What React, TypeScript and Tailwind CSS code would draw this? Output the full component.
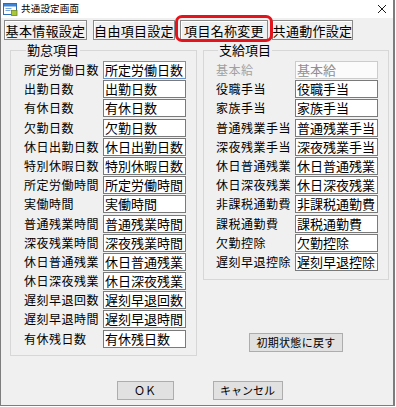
import React from "react";

const font = "font-['Noto_Sans_CJK_JP','Noto_Sans_CJK_SC',sans-serif]";

const kintai = [
  "所定労働日数",
  "出勤日数",
  "有休日数",
  "欠勤日数",
  "休日出勤日数",
  "特別休暇日数",
  "所定労働時間",
  "実働時間",
  "普通残業時間",
  "深夜残業時間",
  "休日普通残業",
  "休日深夜残業",
  "遅刻早退回数",
  "遅刻早退時間",
  "有休残日数",
];

const shikyu = [
  "基本給",
  "役職手当",
  "家族手当",
  "普通残業手当",
  "深夜残業手当",
  "休日普通残業",
  "休日深夜残業",
  "非課税通勤費",
  "課税通勤費",
  "欠勤控除",
  "遅刻早退控除",
];

function Row({ label, disabled, focused }: { label: string; disabled?: boolean; focused?: boolean }) {
  return (
    <div className="flex items-center h-[18px]">
      <div
        className={`w-[79px] text-[12px] leading-[14px] tracking-[0.5px] whitespace-nowrap ${
          disabled ? "text-[#a0a0a0]" : "text-black"
        }`}
      >
        {label}
      </div>
      <div
        className={`w-[83px] h-[18px] border pl-[1px] text-[13px] leading-[16px] whitespace-nowrap overflow-hidden ${
          disabled
            ? "border-[#cccccc] bg-[#fbfbfb] text-[#8f8f8f]"
            : focused
            ? "border-[#6f93c6] bg-white text-black"
            : "border-[#7a7a7a] bg-white text-black"
        }`}
      >
        {label}
      </div>
    </div>
  );
}

function WinButton({ children, className }: { children: React.ReactNode; className?: string }) {
  return (
    <div
      className={`h-[19px] flex items-center justify-center bg-[#e1e1e1] border border-[#adadad] text-[11px] leading-none text-black whitespace-nowrap ${className ?? ""}`}
    >
      {children}
    </div>
  );
}

function Tab({ children, className }: { children: React.ReactNode; className?: string }) {
  return (
    <div
      className={`h-[20px] flex items-center justify-center bg-[#f0f0f0] border border-[#8a8a8a] shadow-[inset_1px_1px_0_#ffffff] text-[13px] leading-none tracking-[0.3px] text-black whitespace-nowrap ${className ?? ""}`}
    >
      {children}
    </div>
  );
}

function AppIcon() {
  return (
    <svg width="15" height="14" viewBox="0 0 15 14">
      <rect x="0.5" y="1.5" width="13" height="11" fill="#ffffff" stroke="#2f6db5" />
      <rect x="1" y="2" width="12" height="2.5" fill="#3d83d6" />
      <rect x="2.5" y="6" width="6" height="1" fill="#7aa6d8" />
      <rect x="2.5" y="8" width="5" height="1" fill="#7aa6d8" />
      <rect x="8.5" y="8.5" width="5.5" height="5" fill="#a9c93a" stroke="#6d8a1e" strokeWidth="0.8" />
    </svg>
  );
}

export default function App() {
  return (
    <div className={`w-[396px] h-[407px] bg-white ${font}`}>
      <div className="relative w-[395px] h-[406px] bg-[#f0f0f0] border-l border-r-2 border-b border-[#7d7d7d] flex flex-col">
        {/* title bar */}
        <div className="h-[18px] bg-white flex items-center pl-[2px] shrink-0">
          <AppIcon />
          <span className="ml-[3px] text-[9.5px] leading-none tracking-[0.2px] text-black">共通設定画面</span>
          <svg className="ml-auto mr-[6px]" width="10" height="10" viewBox="0 0 10 10">
            <path d="M1 1 L9 9 M9 1 L1 9" stroke="#1a1a1a" strokeWidth="1" />
          </svg>
        </div>

        {/* tabs */}
        <div className="flex mt-[2px] pl-[3px] shrink-0">
          <Tab className="w-[83px]">基本情報設定</Tab>
          <Tab className="w-[82px] ml-[6px]">自由項目設定</Tab>
          <Tab className="w-[88px] ml-[5px]">項目名称変更</Tab>
          <Tab className="w-[81px] ml-[4px]">共通動作設定</Tab>
        </div>

        {/* red highlight */}
        <div className="absolute left-[174px] top-[15px] w-[98px] h-[27px] border-[3px] border-[#e3141c] rounded-[7px]" />

        {/* group boxes */}
        <div className="flex mt-[3px] pl-[9px]">
          <fieldset className="w-[187px] border border-[#d7d7d7] pl-[13px] pr-[10px] pb-[7px] pt-[4px] flex flex-col gap-[1.2px]">
            <legend className="ml-[2px] px-[1px] text-[13px] leading-[14px] text-black">勤怠項目</legend>
            {kintai.map((k, i) => (
              <Row key={k} label={k} focused={i === 0} />
            ))}
          </fieldset>

          <div className="ml-[6px] flex flex-col">
            <fieldset className="w-[186px] border border-[#d7d7d7] pl-[12px] pr-[10px] pb-[8px] pt-[4px] flex flex-col gap-[1.2px]">
              <legend className="ml-[2px] px-[1px] text-[13px] leading-[14px] text-black">支給項目</legend>
              {shikyu.map((k, i) => (
                <Row key={k} label={k} disabled={i === 0} />
              ))}
            </fieldset>
            <div className="flex justify-center mt-[53px]">
              <WinButton className="w-[94px] tracking-[0.3px]">初期状態に戻す</WinButton>
            </div>
          </div>
        </div>

        {/* ok / cancel */}
        <div className="flex justify-center mt-[25px] pl-[5px] gap-[39px]">
          <WinButton className="w-[57px]">ＯＫ</WinButton>
          <WinButton className="w-[70px]">キャンセル</WinButton>
        </div>
      </div>
    </div>
  );
}
